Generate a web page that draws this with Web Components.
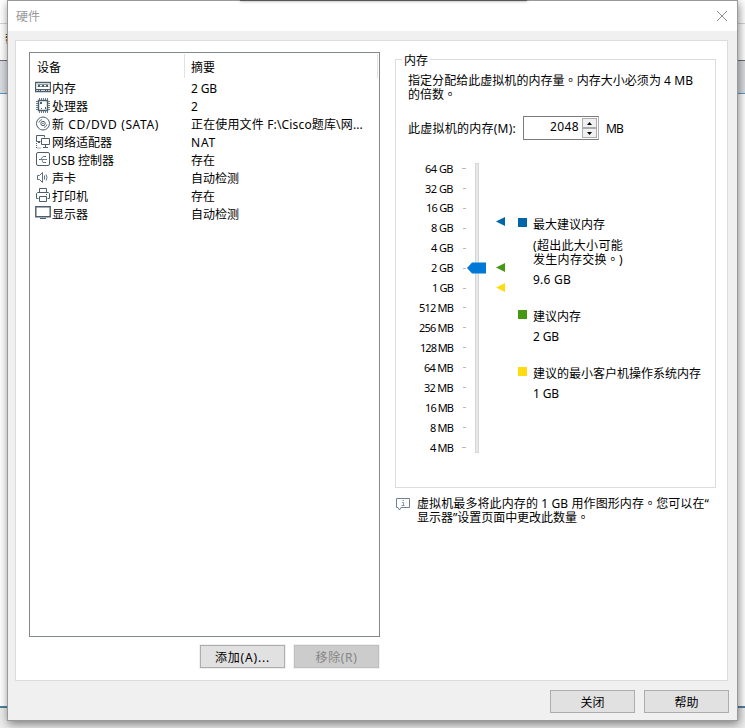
<!DOCTYPE html>
<html lang="zh-CN"><head><meta charset="utf-8"><title>硬件</title>
<style>
html,body{margin:0;height:100%;overflow:hidden}
body{font:12px/14px "Noto Sans","Noto Sans CJK SC",sans-serif;color:#000;background:#fff}
</style></head><body>
<hw-desktop><hw-dialog></hw-dialog></hw-desktop>
<script>
function define(name, html, setup){
  const t=document.createElement('template');
  // Full stops sit in the middle of their square, as in the traditional glyph set.
  t.innerHTML='<style>:host,*{box-sizing:border-box}'+html.replace('<style>','').replace(/。/g,'<span style="font-family:\'Noto Sans CJK TC\';line-height:0" lang="zh-TW">。</span>');
  customElements.define(name, class extends HTMLElement{
    connectedCallback(){
      if(this.shadowRoot) return;
      this.attachShadow({mode:'open'}).append(t.content.cloneNode(true));
      if(setup) setup(this,this.shadowRoot);
    }
  });
}
// One line of text, tracked to the width given in w.
define('fit-text',`<style>:host{display:block;white-space:nowrap;height:14px;line-height:14px}span{display:inline-block;line-height:16px;vertical-align:top}</style><span><slot></slot></span>`,(el,r)=>{
  const s=r.querySelector('span'), w=+el.getAttribute('w');
  if(w) s.style.letterSpacing=((w-s.getBoundingClientRect().width)/el.textContent.length)+'px';
});
define('hw-button',`<style>:host{display:flex;width:85px;height:23px;align-items:center;justify-content:center;border:1px solid #adadad;background:#e1e1e1;padding-top:1px}
:host([disabled]){background:#ccc;border-color:#bfbfbf;color:#858585}
:host([ring]){box-shadow:0 0 0 1px #f0f0f0}</style><slot></slot>`);
const icons={
 mem:'<path d="M.5 2.5h15v9H.5z" stroke-width="1.4"/><path d="M2.5 4.5h11M2.5 6.5h11" stroke="#8b98a1"/><path d="M3 5h2v2H3zM7 5h2v2H7zM11 5h2v2h-2z" fill="#4b5f6d" stroke="none"/><path d="M1 9.5h14"/><path d="M3.5 11v-1M5.5 11v-1M10.5 11v-1M12.5 11v-1"/>',
 cpu:'<path d="M3.5 2.5h9v10h-9z" stroke-width="1.4"/><path d="M4.5 0v2M6.5 0v2M8.5 0v2M10.5 0v2M12.5 0v2M4.5 13v2M6.5 13v2M8.5 13v2M10.5 13v2M12.5 13v2M1 3.5h2M1 5.5h2M1 7.5h2M1 9.5h2M1 11.5h2M13 3.5h2M13 5.5h2M13 7.5h2M13 9.5h2M13 11.5h2" stroke="#6b7b87"/><path d="M5 4h2v2H5zM10 9h1v2h-1zM6 10h1v1H6z" fill="#4b5f6d" stroke="none"/>',
 cd:'<circle cx="8" cy="7.5" r="6.5"/><circle cx="8" cy="7.5" r="2.2"/><circle cx="8" cy="7.5" r=".4"/><path d="M4 6.5A4 4 0 0 1 7 3.5M12 8.5A4 4 0 0 1 9 11.5" stroke-width=".8"/>',
 net:'<path d="M5.5 7.5h-4v-6h8v2"/><path d="M6.5 4.5h8v6h-8z" fill="#fff"/><path d="M3 8.5h2M10.5 11v2M8 13.5h5"/><path d="M1.5 9v5h5" stroke-dasharray="1 1"/>',
 usb:'<rect x="1.5" y=".5" width="13" height="13" rx="1.5"/><path d="M4 7.5h8M6 7l2-2.5h2M7 8l1 2.5h2" stroke-width=".8"/><path d="M4 7h1v1H4zM10 4h1v1h-1zM10 10h1v1h-1z" fill="#4b5f6d" stroke="none"/>',
 sound:'<path d="M2.5 5.5h2L7.5 2.5v10L4.5 9.5h-2zM9.5 5.5v4M11 4.5q2 3 0 6" stroke-width=".9"/>',
 print:'<path d="M4.5 4.5v-4h7v4M3.5 10.5h-2v-5l1-1h11l1 1v5h-2M4.5 8.5h7v5h-7zM11 6.5h1"/>',
 screen:'<path d="M.8 .8h14.4v9.9H.8z" stroke-width="1.4"/><path d="M5 12.5h6"/>'
};
define('hw-device',`<style>:host{display:grid;grid-template-columns:16px 140px 1fr;height:18px;padding-left:5px;align-items:center}
svg{width:16px;height:16px;fill:none;stroke:#4b5f6d}slot{display:block}</style><svg viewBox="0 0 16 16"></svg><slot name="name"></slot><slot></slot>`,(el,r)=>{r.querySelector('svg').innerHTML=icons[el.getAttribute('icon')]});
define('hw-list',`<style>:host{display:block;width:351px;height:585px;border:1px solid #828790;background:#fff}
header{display:grid;grid-template-columns:155px 193px;height:26px}
header>*{border-right:1px solid #e2e2e2;height:24px;margin-top:1px;padding:6px 0 0 7px}header>*+*{padding-left:6px}</style>
<header><fit-text>设备</fit-text><fit-text>摘要</fit-text></header><main></main>`,(el,r)=>{
 r.querySelector('main').innerHTML=[
 ['mem','内存',24,'2 GB',26],['cpu','处理器',36,'2',7],['cd','新 CD/DVD (SATA)',107,'正在使用文件 F:\\Cisco题库\\网...',172],['net','网络适配器',60,'NAT',25],['usb','USB 控制器',62,'存在',24],['sound','声卡',24,'自动检测',48],['print','打印机',36,'存在',24],['screen','显示器',36,'自动检测',48]
 ].map(d=>`<hw-device icon="${d[0]}"><fit-text slot="name" w="${d[2]}" style="margin-left:1px">${d[1]}</fit-text><fit-text w="${d[4]}">${d[3]}</fit-text></hw-device>`).join('');
});
define('hw-spinner',`<style>:host{display:flex;width:76px;height:24px;border:1px solid #7a7a7a;border-right-color:#abadb3;background:#fff;padding:1px}
fit-text{flex:1;text-align:right;padding:1px 3px 0 0}.b{width:15px;display:grid;grid-template-rows:1fr 1fr}
i{border:1px solid #acacac;background:#f0f0f0;display:flex;align-items:center;justify-content:center}svg{width:5px;height:3px}</style>
<fit-text w="29">2048</fit-text><div class="b"><i><svg viewBox="0 0 5 3"><path d="M0 3L2.5 0 5 3z"/></svg></i><i><svg viewBox="0 0 5 3"><path d="M0 0h5L2.5 3z"/></svg></i></div>`);
define('hw-scale',`<style>:host{display:grid;grid-template-columns:46px 8px 4px 9px 4px 17px 9px;grid-template-rows:290px;height:290px}
ol{margin:-5px 1px 0 -1px;padding:0;list-style:none;font-size:11px}
li{height:19.93px;display:flex;justify-content:flex-end}li fit-text{height:20px;padding-top:2.6px}
.t{margin-top:5px;height:280px;display:flex;flex-direction:column;justify-content:space-between;align-items:flex-end}.t i{width:3px;height:1px;background:#b9b9b9}.t i:first-child,.t i:last-child{width:4px}
.track{background:#e7eaea;border:1px solid #d6d6d6;position:relative}.track svg{position:absolute;left:-9px;top:98px;width:19px;height:12px}
.m svg{display:block;width:9px;height:9px}</style>
<ol></ol><span></span><div class="t"></div><span></span><div class="track"><svg viewBox="0 0 19 12"><path d="M0 6 5 .5h14v11H5z" fill="#0078d7"/></svg></div><span></span><div class="m"></div>`,(el,r)=>{
 const l=['64 GB','32 GB','16 GB','8 GB','4 GB','2 GB','1 GB','512 MB','256 MB','128 MB','64 MB','32 MB','16 MB','8 MB','4 MB'];
 const w=[28,28,27,22,22,22,21,34,34,33,29,29,28,23,23];
 r.querySelector('ol').innerHTML=l.map((s,i)=>`<li><fit-text w="${w[i]}">${s}</fit-text></li>`).join('');
 r.querySelector('.t').innerHTML='<i></i>'.repeat(15);
 r.querySelector('.m').innerHTML=[['#0066ab',54],['#449911',37],['#ffdc0f',11]].map(a=>`<svg viewBox="0 0 9 9" style="margin-top:${a[1]}px"><path d="M0 4.5 9 0v9z" fill="${a[0]}"/></svg>`).join('');
});
define('hw-legend',`<style>:host{display:grid;grid-template-columns:9px 1fr;column-gap:6px}
i{width:9px;height:9px;margin-top:1px;background:var(--c)}</style><i></i><div><slot></slot></div>`);
define('hw-memory',`<style>:host{display:block;width:321px;height:429px;border:1px solid #dcdcdc;padding-left:12px}
.cap{background:#fff;padding:0 2px;margin:-7px 0 0 -6px;width:28px;height:14px}
.d{margin-top:6px}.row{display:flex;margin-top:15px;height:24px;align-items:center}.row hw-spinner{margin-left:7px}
.row>fit-text:last-child{margin-left:7px}.body{display:flex;margin-top:23px}
.lg{padding-top:54px;margin-left:13px}.g{margin-top:7px}.s{margin-top:6px}</style>
<fit-text class="cap">内存</fit-text>
<div class="d"><fit-text w="285">指定分配给此虚拟机的内存量。内存大小必须为 4 MB</fit-text><fit-text w="48">的倍数。</fit-text></div>
<div class="row"><fit-text w="108">此虚拟机的内存(M):</fit-text><hw-spinner></hw-spinner><fit-text w="17">MB</fit-text></div>
<div class="body"><hw-scale></hw-scale><div class="lg">
<hw-legend style="--c:#0066ab"><fit-text w="72">最大建议内存</fit-text><fit-text class="g" w="90">(超出此大小可能</fit-text><fit-text w="90">发生内存交换。)</fit-text><fit-text class="s" w="38">9.6 GB</fit-text></hw-legend>
<hw-legend style="--c:#449911;margin-top:23px"><fit-text w="48">建议内存</fit-text><fit-text class="s" w="26">2 GB</fit-text></hw-legend>
<hw-legend style="--c:#ffdc0f;margin-top:23px"><fit-text w="168">建议的最小客户机操作系统内存</fit-text><fit-text class="s" w="26">1 GB</fit-text></hw-legend>
</div></div>`);
define('hw-info',`<style>:host{display:flex;gap:7px;margin-top:9px;padding-left:1px}svg{width:14px;height:13px;fill:none;stroke:#71808c;margin-top:1px}div{margin-top:-1px}</style>
<svg viewBox="0 0 14 13"><path d="M.5.5h13v9H5L3.5 12 2 9.5H.5z"/><path d="M6 4.5h1.5v3M5.5 7.5h3M6.5 2.5h1.5" stroke="#8998a3"/></svg><div><slot></slot></div>`);
define('hw-title',`<style>:host{display:flex;height:30px;background:#fff;align-items:center;justify-content:space-between;padding:0 10px 1px 8px;color:#999}svg{width:10px;height:10px;stroke:#8e8e8e;fill:none}</style>
<fit-text w="24">硬件</fit-text><svg viewBox="0 0 10 10"><path d="M0 0 10 10M10 0 0 10"/></svg>`);
define('hw-dialog',`<style>:host{display:block;width:731px;height:721px;background:#f0f0f0;border:1px solid #999;box-shadow:1px 3px 9px rgba(0,0,0,.48)}
.panel{margin:9px 0 0 7px;width:713px;height:641px;background:#fff;border:1px solid #dcdcdc;display:flex;gap:15px;padding:11px 0 0 13px}
.acts{display:flex;justify-content:flex-end;gap:9px;margin:8px 1px 0 0}.foot{display:flex;justify-content:flex-end;gap:9px;margin-top:9px;padding-right:8px}
.right{padding-top:7px}</style>
<hw-title></hw-title><div class="panel"><div><hw-list></hw-list><div class="acts"><hw-button ring><fit-text w="55">添加(A)...</fit-text></hw-button><hw-button ring disabled><fit-text w="42">移除(R)</fit-text></hw-button></div></div>
<div class="right"><hw-memory></hw-memory><hw-info><fit-text w="292">虚拟机最多将此内存的 1 GB 用作图形内存。您可以在“</fit-text><fit-text w="172">显示器”设置页面中更改此数量。</fit-text></hw-info></div></div>
<div class="foot"><hw-button><fit-text w="24">关闭</fit-text></hw-button><hw-button><fit-text w="24">帮助</fit-text></hw-button></div>`);
define('hw-desktop',`<style>:host{display:block;height:728px;width:745px;padding-left:7px;overflow:hidden;position:relative;
background:linear-gradient(#fff 23px,#d4d4d4 23px 24px,#fff 24px 60px,#707070 60px 61px,#d9dce1 61px 93px,#579bc0 93px 94px,#fff 94px 706px,#398abb 706px 707px,#667780 707px 708px,#ececec 708px)}
.behind{position:absolute;left:5px;top:32px;width:2px;overflow:hidden}
.edge{position:absolute;left:240px;top:0;width:287px;height:1px;background:#555;box-shadow:0 0 3px #555}</style>
<fit-text class="behind">帮</fit-text><slot></slot><div class="edge"></div>`);
</script></body></html>
